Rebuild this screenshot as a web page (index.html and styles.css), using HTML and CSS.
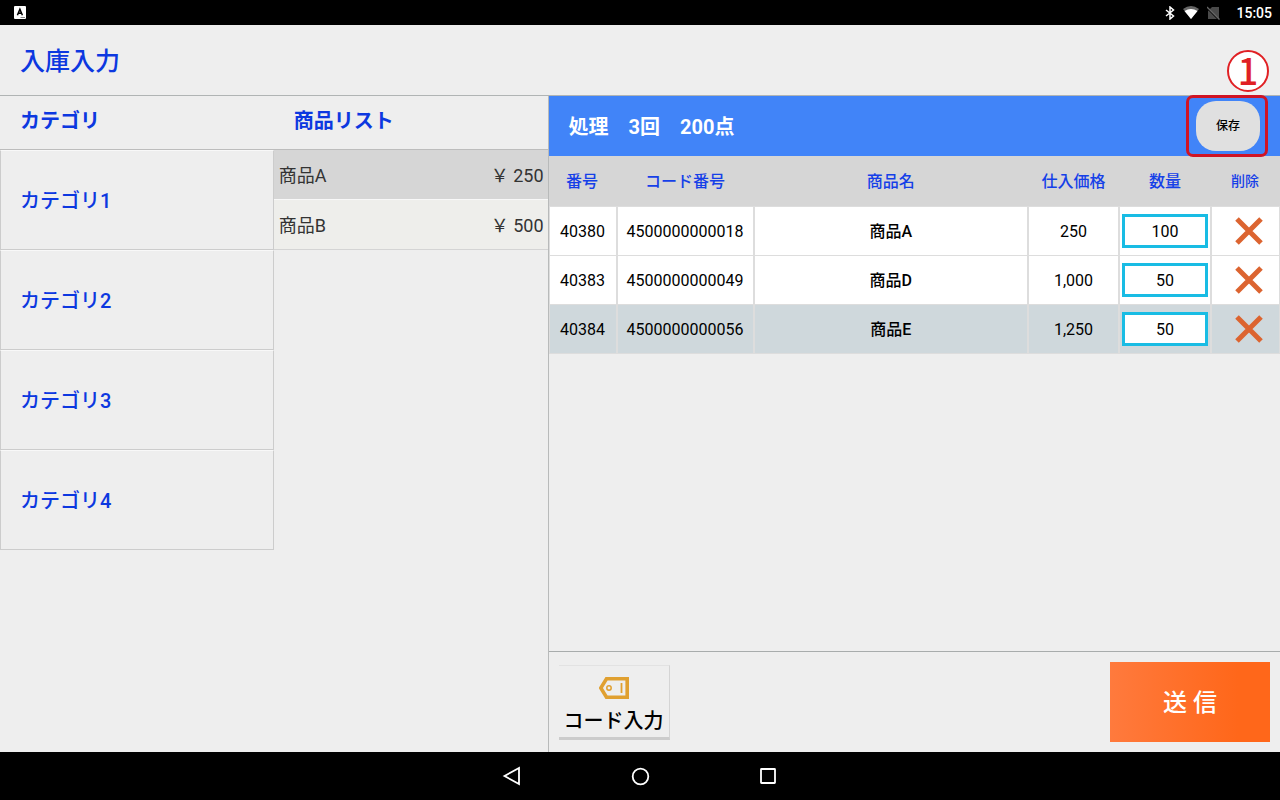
FILE: index.html
```
<!DOCTYPE html>
<html lang="ja">
<head>
<meta charset="utf-8">
<meta name="viewport" content="width=device-width, initial-scale=1">
<title>入庫入力</title>
<link rel="stylesheet" href="styles.css">
</head>
<body>
<div class="status">
  <svg class="status-app" viewBox="0 0 12 13" aria-hidden="true"><rect width="12" height="13" rx="1" fill="#fff"/><path d="M3.400 9.200 5.900 3.200 8.400 9.200M4.300 7.200h3.200" fill="none" stroke="#000" stroke-width="1.500"/><path d="M6.500 11.500H11" stroke="#888" stroke-width="1"/></svg>
  <div class="status-right">
    <svg class="status-bt" viewBox="0 0 10 14" aria-hidden="true"><path d="M1 4 8.500 10 5 13V1l3.500 3L1 10" fill="none" stroke="#fff" stroke-width="1.500"/></svg>
    <svg class="status-wifi" viewBox="0 0 16 13" aria-hidden="true"><path d="M0 3Q8-3 16 3L8 13Z" fill="#666"/><path d="M1.500 5Q8 1 14.500 5L8 13Z" fill="#fff"/></svg>
    <svg class="status-sim" viewBox="0 0 13 14" aria-hidden="true"><path d="M5 1h7v12H1V5Z" fill="#4a4a4a"/><path d="M0 2 12 14" stroke="#000" stroke-width="1.500"/><path d="M0 1 12.500 13.500" stroke="#666" stroke-width="1.300"/></svg>
    <span>15:05</span>
  </div>
</div>

<header class="header"><h1>入庫入力</h1></header>

<main class="main">
  <section class="browse">
    <div class="browse-heads"><h2>カテゴリ</h2><h2>商品リスト</h2></div>
    <div class="browse-lists">
      <div class="categories">
        <button type="button">カテゴリ1</button>
        <button type="button">カテゴリ2</button>
        <button type="button">カテゴリ3</button>
        <button type="button">カテゴリ4</button>
      </div>
      <div class="products">
        <button type="button" class="selected"><span>商品A</span><span>￥ 250</span></button>
        <button type="button"><span>商品B</span><span>￥ 500</span></button>
      </div>
    </div>
  </section>

  <section class="entry">
    <div class="summary">
      <p>処理　3回　200点</p>
      <div class="save-wrap">
        <button type="button" class="save">保存</button>
        <span class="mark-frame"></span>
        <span class="mark-number">1</span>
      </div>
    </div>
    <table class="items">
      <colgroup><col class="c-no"><col class="c-code"><col class="c-name"><col class="c-price"><col class="c-qty"><col class="c-del"></colgroup>
      <thead>
        <tr><th>番号</th><th>コード番号</th><th>商品名</th><th>仕入価格</th><th>数量</th><th class="small">削除</th></tr>
      </thead>
      <tbody>
        <tr>
          <td>40380</td><td>4500000000018</td><td class="name">商品A</td><td>250</td>
          <td class="qty"><input type="text" value="100" aria-label="商品A 数量"></td>
          <td class="del"><button type="button" aria-label="商品A 削除"><svg viewBox="0 0 28 28"><path d="M2 2 26 26M26 2 2 26"/></svg></button></td>
        </tr>
        <tr>
          <td>40383</td><td>4500000000049</td><td class="name">商品D</td><td>1,000</td>
          <td class="qty"><input type="text" value="50" aria-label="商品D 数量"></td>
          <td class="del"><button type="button" aria-label="商品D 削除"><svg viewBox="0 0 28 28"><path d="M2 2 26 26M26 2 2 26"/></svg></button></td>
        </tr>
        <tr class="current">
          <td>40384</td><td>4500000000056</td><td class="name">商品E</td><td>1,250</td>
          <td class="qty"><input type="text" value="50" aria-label="商品E 数量"></td>
          <td class="del"><button type="button" aria-label="商品E 削除"><svg viewBox="0 0 28 28"><path d="M2 2 26 26M26 2 2 26"/></svg></button></td>
        </tr>
      </tbody>
    </table>
    <footer class="actions">
      <button type="button" class="code">
        <svg viewBox="0 0 30 22" aria-hidden="true"><path d="M7.500 1.800H28.200V20.200H7.500L1.800 11Z" fill="none" stroke="#e0a030" stroke-width="3.600"/><circle cx="10" cy="11" r="2.200" fill="none" stroke="#e0a030" stroke-width="1.500"/><path d="M22.500 6v10" stroke="#e0a030" stroke-width="1.800"/></svg>
        <span>コード入力</span>
      </button>
      <button type="button" class="send">送 信</button>
    </footer>
  </section>
</main>

<nav class="navbar">
  <button type="button" aria-label="戻る"><svg viewBox="0 0 20 20"><path d="M17 2V18L2.500 10Z"/></svg></button>
  <button type="button" aria-label="ホーム"><svg viewBox="0 0 20 20"><circle cx="10.500" cy="10.500" r="7.800"/></svg></button>
  <button type="button" aria-label="履歴"><svg viewBox="0 0 20 20"><rect x="3" y="3" width="14" height="14" rx=".5"/></svg></button>
</nav>
</body>
</html>
```
FILE: styles.css
```
* { box-sizing: border-box; }
body {
  margin: 0;
  min-height: 100vh;
  display: flex;
  flex-direction: column;
  background: #eee;
  color: #000;
  font: 500 16px/24px Roboto, "Noto Sans CJK JP", sans-serif;
}
button, input { font: inherit; color: inherit; margin: 0; padding: 0; border: 0; background: none; }
h1, h2, p { margin: 0; }

.status {
  height: 25px;
  padding: 0 8px 0 14px;
  display: flex;
  align-items: center;
  justify-content: space-between;
  background: #000;
  color: #fff;
  font-size: 14px;
}
.status-app { width: 12px; height: 13px; }
.status-right { display: flex; align-items: center; }
.status-bt { width: 10px; height: 14px; margin-right: 8px; }
.status-wifi { width: 16px; height: 13px; margin-right: 8px; }
.status-sim { width: 13px; height: 14px; margin-right: 16px; }

.header { height: 71px; padding: 4px 20px 0; display: flex; align-items: center; border-bottom: 1px solid #b0b4b4; }
.header h1 { color: #0c38e0; font-size: 25px; font-weight: 500; }

.main { flex: 1; display: grid; grid-template-columns: 3fr 4fr; }
.browse { display: flex; flex-direction: column; border-right: 1px solid #b8baba; }
.browse-heads { display: grid; grid-template-columns: 1fr 1fr; height: 54px; padding-top: 13px; border-bottom: 1px solid #bcbcbc; }
.browse-heads h2 { padding-left: 20px; color: #0c38e0; font-size: 20px; font-weight: 700; }
.browse-lists { display: grid; grid-template-columns: 1fr 1fr; align-items: start; }
.categories, .products { display: flex; flex-direction: column; }
.categories button {
  height: 100px;
  padding: 2px 19px 0;
  text-align: left;
  color: #0c38e0;
  font-size: 20px;
  border: 1px solid #ccc;
  border-top-color: #f8f8f8;
}
.products button {
  height: 50px;
  padding: 2px 4px 0 5px;
  display: flex;
  align-items: center;
  justify-content: space-between;
  background: #eeeeeb;
  color: #333;
  font-size: 18px;
  font-weight: 400;
  border-bottom: 1px solid #d4d4d4;
}
.products .selected { background: #d6d6d6; border-bottom-color: #f8f8f8; }

.entry { display: flex; flex-direction: column; }
.summary {
  height: 60px;
  padding: 0 20px;
  display: flex;
  align-items: center;
  justify-content: space-between;
  background: #4184f8;
  color: #fff;
  font-size: 20px;
  font-weight: 700;
}
.summary p { padding-top: 2px; }
.save-wrap { position: relative; }
.save { display: block; width: 64px; height: 50px; border-radius: 20px; background: #e0e0e0; color: #000; font-size: 12px; font-weight: 500; }
.mark-frame { position: absolute; inset: -6px -8px -6px -10px; border: 3px solid #d01424; border-radius: 7px; pointer-events: none; }
.mark-number {
  position: absolute;
  right: -9px;
  bottom: 59px;
  width: 42px;
  height: 42px;
  border: 2px solid #e02024;
  border-radius: 50%;
  background: #fff;
  color: #e02024;
  text-align: center;
  font: 500 36px/34px "Noto Sans CJK JP", sans-serif;
}

.items { width: 100%; table-layout: fixed; border-collapse: separate; border-spacing: 0; }
.c-no { width: 69px; }
.c-code { width: 137px; }
.c-price { width: 91px; }
.c-qty { width: 92px; }
.c-del { width: 68px; }
.items th { height: 51px; padding: 2px 2px 0 0; background: #d6d6d6; color: #1540e8; font-weight: 500; border-bottom: 1px solid #ddd; }
.items th.small { padding-top: 0; font-size: 14px; }
.items td { height: 49px; padding: 2px 0 0; text-align: center; background: #fff; font-weight: 400; border-right: 2px solid #ddd; border-bottom: 1px solid #ddd; }
.items td.name { font-weight: 500; }
.items td:last-child { border-right-width: 1px; }
.items td:first-child { border-left: 1px solid #ddd; }
.items .current td { background: #cfd8dc; }
.items .qty { padding: 0 2px; }
.qty input { display: block; width: 100%; height: 34px; border: 3px solid #18bce4; background: #fff; text-align: center; }
.items .del { padding: 0 0 0 6px; }
.del button { display: flex; margin: 0 auto; }
.del svg { width: 28px; height: 28px; fill: none; stroke: #dc6430; stroke-width: 5; }

.actions { margin-top: auto; padding: 10px; display: flex; align-items: flex-start; justify-content: space-between; border-top: 1px solid #a8acac; }
.code {
  margin-top: 3px;
  padding: 11px 5px 4px;
  display: flex;
  flex-direction: column;
  align-items: center;
  gap: 10px;
  border-top: 1px solid #e2e2e2;
  border-right: 1px solid #d4d4d4;
  border-bottom: 3px solid #ccc;
  font-size: 20px;
}
.code svg { width: 30px; height: 22px; }
.send { width: 160px; height: 80px; padding-top: 2px; background: linear-gradient(90deg, #ff7a3d, #ff671a 80%); color: #fff; font-size: 24px; font-weight: 500; }

.navbar { height: 48px; display: flex; align-items: center; justify-content: center; gap: 108px; background: #000; }
.navbar button { display: flex; }
.navbar svg { width: 20px; height: 20px; fill: none; stroke: #fff; stroke-width: 1.8; }
```
